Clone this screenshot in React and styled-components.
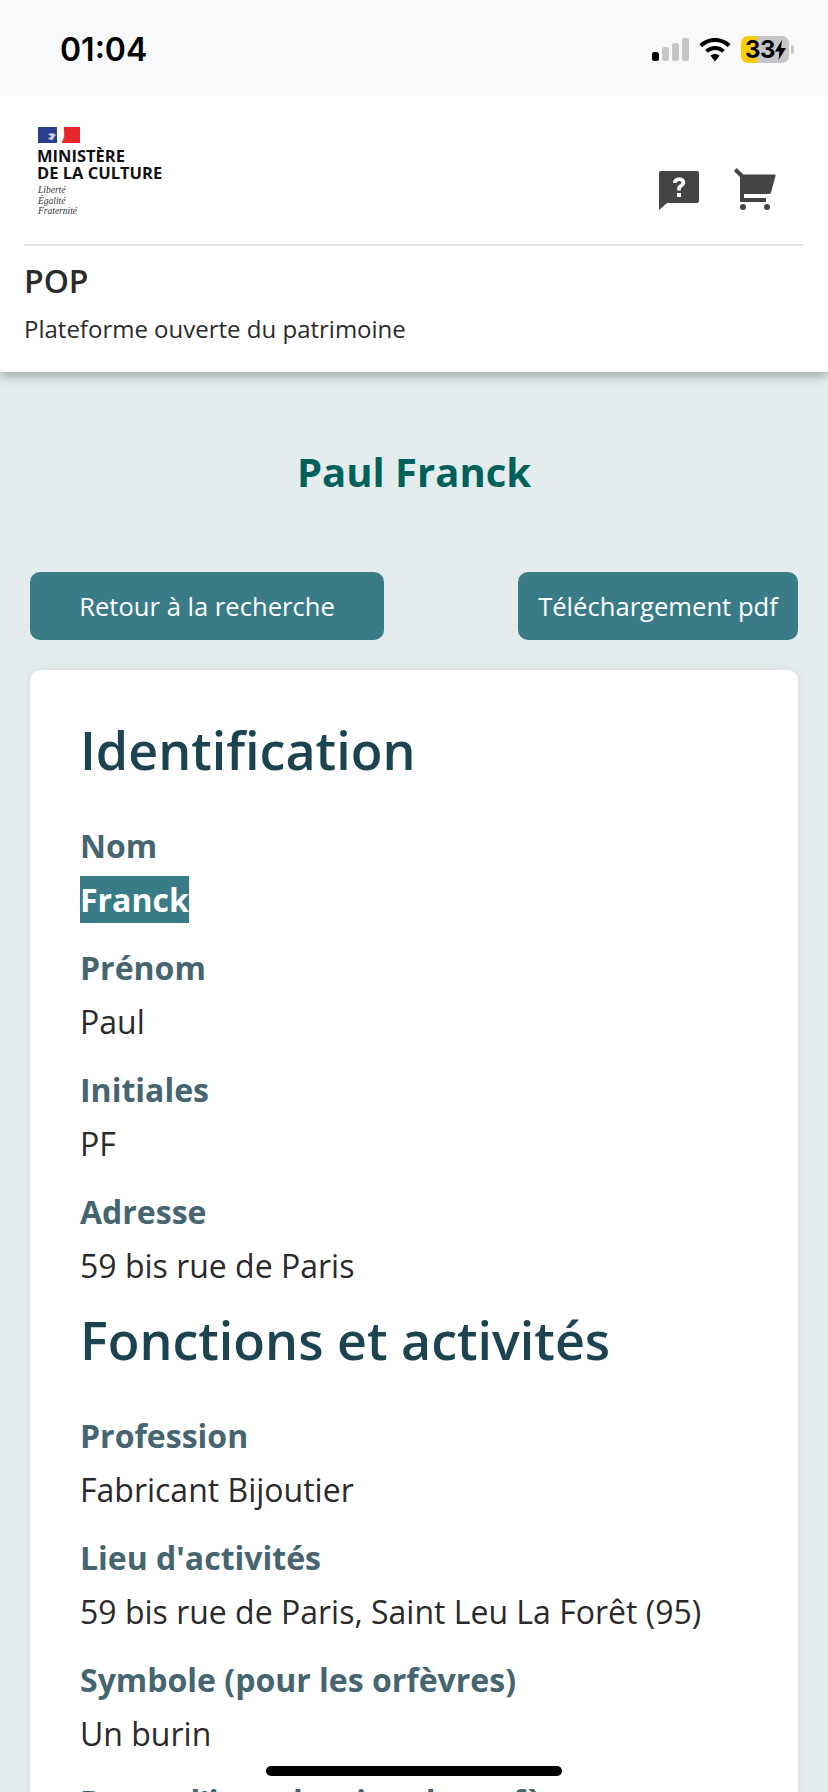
import styled, { createGlobalStyle } from "styled-components";

const GlobalStyle = createGlobalStyle`
  html, body {
    margin: 0;
    padding: 0;
    height: 1792px;
    overflow: hidden;
    background: #e5ecee;
    font-family: "Open Sans", sans-serif;
  }
`;

const Page = styled.div`
  width: 828px;
  height: 1792px;
  overflow: hidden;
  position: relative;
`;

const StatusBar = styled.div`
  height: 96px;
  background: #f9f9fb;
  display: flex;
  align-items: flex-start;
  justify-content: space-between;
  padding: 28px 34px 0 60px;
  box-sizing: border-box;
  position: relative;
  z-index: 1;
`;
const Clock = styled.div`
  font-family: Inter, sans-serif;
  font-size: 32px;
  font-weight: 600;
  line-height: 44px;
  color: #000;
`;
const StatusIcons = styled.div`
  display: flex;
  align-items: center;
  gap: 10px;
  margin-top: 8px;
`;
const BatteryWrap = styled.div`
  display: flex;
  align-items: center;
  gap: 2px;
`;
const Battery = styled.div`
  width: 48px;
  height: 27px;
  border-radius: 7px;
  background: linear-gradient(to right, #ffcc00 33%, #c6c6c8 33%);
  font-family: Inter, sans-serif;
  font-size: 24px;
  font-weight: 700;
  color: #000;
  display: flex;
  align-items: center;
  padding-left: 4px;
  box-sizing: border-box;
  letter-spacing: -0.5px;
`;
const BatteryNub = styled.div`
  width: 3px;
  height: 9px;
  border-radius: 0 3px 3px 0;
  background: #c6c6c8;
`;

const Header = styled.header`
  background: #fff;
  height: 276px;
  box-shadow: 0 4px 10px rgba(0, 0, 0, 0.3);
  padding: 0 24px;
  box-sizing: border-box;
`;
const HeaderTop = styled.div`
  height: 148px;
  border-bottom: 2px solid #e3e3e3;
  display: flex;
  justify-content: space-between;
`;
const Logo = styled.div`
  padding: 31px 0 0 14px;
`;
const Ministry = styled.div`
  margin: 4px 0 0 -1px;
  font-size: 16.5px;
  font-weight: 700;
  line-height: 17px;
  color: #111;
`;
const Motto = styled.div`
  margin-top: 4px;
  font-family: "Liberation Serif", serif;
  font-style: italic;
  font-size: 9.5px;
  line-height: 10.5px;
  color: #333;
`;
const HeaderIcons = styled.div`
  display: flex;
  align-items: flex-end;
  gap: 35px;
  padding: 72px 28px 0 0;
  height: 42px;
`;
const SiteName = styled.div`
  font-size: 32px;
  font-weight: 600;
  line-height: 44px;
  color: #2b2b2b;
  margin-top: 13px;
`;
const SiteTagline = styled.div`
  font-size: 24px;
  line-height: 32px;
  color: #2b2b2b;
  margin-top: 10px;
`;

const Title = styled.h1`
  margin: 0;
  padding-top: 74px;
  text-align: center;
  font-size: 40px;
  font-weight: 700;
  line-height: 52px;
  color: #00605a;
`;

const Actions = styled.div`
  display: flex;
  justify-content: space-between;
  padding: 0 30px;
  margin-top: 74px;
`;
const Button = styled.div`
  width: ${(p) => p.$width}px;
  height: 68px;
  border-radius: 10px;
  background: #397c87;
  color: #fff;
  font-size: 25.6px;
  display: flex;
  align-items: center;
  justify-content: center;
`;

const Card = styled.main`
  margin: 30px 30px 0;
  padding: 45px 50px 0;
  background: #fff;
  border-radius: 10px;
  box-shadow: 0 0 8px rgba(0, 0, 0, 0.08);
  height: 1200px;
`;
const SectionTitle = styled.h2`
  margin: ${(p) => p.$top}px 0 0;
  font-size: 52px;
  font-weight: 600;
  line-height: 70px;
  color: #1b4350;
`;
const Field = styled.div`
  margin-top: ${(p) => p.$top || 24}px;
`;
const Label = styled.div`
  font-size: 32px;
  font-weight: 700;
  line-height: 44px;
  color: #456570;
`;
const Value = styled.div`
  font-size: 32px;
  line-height: 44px;
  margin-top: 10px;
  color: #2a2a2a;
`;
const Highlight = styled.span`
  background: #397c87;
  color: #fff;
  font-weight: 700;
  padding: 2px 0;
`;
const HomeBar = styled.div`
  position: absolute;
  left: 266px;
  bottom: 16px;
  width: 296px;
  height: 10px;
  border-radius: 5px;
  background: #000;
`;

const fields = [
  { label: "Prénom", value: "Paul" },
  { label: "Initiales", value: "PF" },
  { label: "Adresse", value: "59 bis rue de Paris" },
];
const activities = [
  { label: "Lieu d'activités", value: "59 bis rue de Paris, Saint Leu La Forêt (95)" },
  { label: "Symbole (pour les orfèvres)", value: "Un burin" },
];

const Signal = () => (
  <svg width="37" height="23" viewBox="0 0 37 23">
    <rect x="0" y="14" width="7" height="9" rx="2.5" fill="#000" />
    <rect x="10" y="9" width="7" height="14" rx="2.5" fill="#c6c6c8" />
    <rect x="20" y="5" width="7" height="18" rx="2.5" fill="#c6c6c8" />
    <rect x="30" y="0" width="7" height="23" rx="2.5" fill="#c6c6c8" />
  </svg>
);

const Wifi = () => (
  <svg width="32" height="24" viewBox="0 0 32 24">
    <path d="M16 0C10 0 4.500 2.300 0.500 6.200L3.300 9.200C6.600 6 11 4.100 16 4.100S25.400 6 28.700 9.200L31.500 6.200C27.500 2.300 22 0 16 0Z" fill="#000" />
    <path d="M16 8C12.200 8 8.800 9.500 6.200 11.900L9 14.800C10.900 13.100 13.300 12.100 16 12.100S21.100 13.100 23 14.800L25.800 11.900C23.200 9.500 19.800 8 16 8Z" fill="#000" />
    <path d="M16 16C14.200 16 12.700 16.600 11.500 17.700L16 23.500L20.500 17.700C19.300 16.600 17.800 16 16 16Z" fill="#000" />
  </svg>
);

const Bolt = () => (
  <svg width="11" height="20" viewBox="0 0 11 20">
    <path d="M7 0L0 11.500H4.500L3.500 20L11 8H6Z" fill="#000" />
  </svg>
);

const Flag = () => (
  <svg width="42" height="16" viewBox="0 0 42 16" style={{ display: "block" }}>
    <rect x="0" y="0" width="19" height="16" fill="#2b3f8e" />
    <rect x="24" y="0" width="18" height="16" fill="#e8262b" />
    <path d="M19 0H26C25 3 27 5 26 8C27 10 25 12 25 13L23 16H19Z" fill="#fff" />
    <path d="M10 7C13 6 16 6 18 8C16 9 16 12 14 13C12 13 11 12 10 11C12 11 13 10 13 9Z" fill="#c9cfe3" />
  </svg>
);

const HelpIcon = () => (
  <svg width="40" height="39" viewBox="0 0 40 39">
    <path d="M2 0H38C39.100 0 40 .9 40 2V30C40 31.100 39.100 32 38 32H8L0 39V2C0 .9.900 0 2 0Z" fill="#444" />
    <path d="M14 12C14 8.500 16.500 6.500 20.200 6.500C24 6.500 26.300 8.500 26.300 11.500C26.300 13.500 25.300 14.700 23.600 15.800C22.300 16.600 21.900 17.200 21.900 18.500V19.500H18.200V18C18.200 16 18.900 14.900 20.600 13.800C21.900 13 22.400 12.500 22.400 11.600C22.400 10.600 21.500 9.900 20.200 9.900C18.800 9.900 17.800 10.800 17.700 12Z" fill="#fff" />
    <rect x="18" y="22" width="4" height="4" fill="#fff" />
  </svg>
);

const CartIcon = () => (
  <svg width="42" height="42" viewBox="0 0 42 42">
    <path d="M2.500 0L9.500 6.500H40.500Q41.800 6.500 41.500 8L37 24.500Q36.700 26 35 26H10V30H32V34H6V9L0 3Z" fill="#444" />
    <circle cx="9" cy="39" r="3" fill="#444" />
    <circle cx="33" cy="39" r="3" fill="#444" />
  </svg>
);

export default function App() {
  return (
    <Page>
      <GlobalStyle />
      <StatusBar>
        <Clock>01:04</Clock>
        <StatusIcons>
          <Signal />
          <Wifi />
          <BatteryWrap>
            <Battery>
              33
              <Bolt />
            </Battery>
            <BatteryNub />
          </BatteryWrap>
        </StatusIcons>
      </StatusBar>
      <Header>
        <HeaderTop>
          <Logo>
            <Flag />
            <Ministry>
              MINISTÈRE
              <br />
              DE LA CULTURE
            </Ministry>
            <Motto>
              Liberté
              <br />
              Égalité
              <br />
              Fraternité
            </Motto>
          </Logo>
          <HeaderIcons>
            <HelpIcon />
            <CartIcon />
          </HeaderIcons>
        </HeaderTop>
        <SiteName>POP</SiteName>
        <SiteTagline>Plateforme ouverte du patrimoine</SiteTagline>
      </Header>
      <Title>Paul Franck</Title>
      <Actions>
        <Button $width={354}>Retour à la recherche</Button>
        <Button $width={280}>Téléchargement pdf</Button>
      </Actions>
      <Card>
        <SectionTitle $top={0}>Identification</SectionTitle>
        <Field $top={39}>
          <Label>Nom</Label>
          <Value>
            <Highlight>Franck</Highlight>
          </Value>
        </Field>
        {fields.map((f) => (
          <Field key={f.label}>
            <Label>{f.label}</Label>
            <Value>{f.value}</Value>
          </Field>
        ))}
        <SectionTitle $top={17}>Fonctions et activités</SectionTitle>
        <Field $top={39}>
          <Label>Profession</Label>
          <Value>Fabricant Bijoutier</Value>
        </Field>
        {activities.map((f) => (
          <Field key={f.label}>
            <Label>{f.label}</Label>
            <Value>{f.value}</Value>
          </Field>
        ))}
        <Field>
          <Label>Dates d'insculpation des orfèvres</Label>
        </Field>
      </Card>
      <HomeBar />
    </Page>
  );
}
